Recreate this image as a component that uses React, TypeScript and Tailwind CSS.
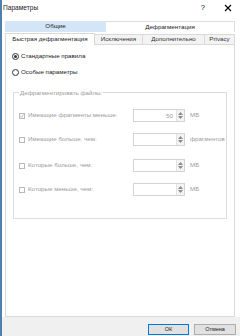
import React from "react";

function Spin() {
  return (
    <div className="w-[8px] h-[11px] flex flex-col items-center justify-center gap-[1px] bg-[#f3f3f3] border-l border-[#e2e2e2]">
      <svg width="5" height="3" viewBox="0 0 5 3"><path d="M0 3 L2.5 0 L5 3 Z" fill="#8a8a8a" /></svg>
      <svg width="5" height="3" viewBox="0 0 5 3"><path d="M0 0 L2.5 3 L5 0 Z" fill="#8a8a8a" /></svg>
    </div>
  );
}

function Row({ label, value, unit, checked, mt }: { label: string; value?: string; unit: string; checked?: boolean; mt: string }) {
  return (
    <div className={`flex items-center h-[11px] pl-[5px] ${mt}`}>
      <div className="w-[6px] h-[6px] border border-[#b9b9b9] bg-white flex items-center justify-center">
        {checked && (
          <svg width="6" height="6" viewBox="0 0 6 6"><path d="M0.6 3 L2.3 4.7 L5.6 0.8" stroke="#8d8d8d" strokeWidth="1" fill="none" /></svg>
        )}
      </div>
      <span className="ml-[3px] w-[105px] text-[#9b9b9b] whitespace-nowrap">{label}</span>
      <div className="flex border border-[#d3d3d3] bg-white">
        <div className="w-[42px] h-[11px] text-right pr-[3px] text-[#9b9b9b] leading-[11px]">{value}</div>
        <Spin />
      </div>
      <span className="ml-[5px] text-[#9b9b9b]">{unit}</span>
    </div>
  );
}

export default function App() {
  return (
    <div className="w-[240px] h-[336px] flex bg-white overflow-hidden text-[6.2px] leading-none text-[#1a1a1a] font-['Liberation_Sans',Arial,sans-serif]">
      <div className="w-[2px] shrink-0 bg-[#4f7fae]" />
      <div className="w-[238px] flex flex-col">
        {/* title */}
        <div className="h-[16px] flex items-center justify-between pl-[1px] pr-[8px]">
          <span className="text-[6.6px]">Параметры</span>
          <div className="flex items-center gap-[19px]">
            <span className="text-[7.5px] text-black">?</span>
            <svg width="8" height="8" viewBox="0 0 8 8" className="shrink-0">
              <path d="M1 1 L7 7 M7 1 L1 7" stroke="#000" strokeWidth="1.1" />
            </svg>
          </div>
        </div>

        {/* tabs */}
        <div className="pl-[3px] pt-[5px]">
          <div className="flex h-[11px]">
            <div className="w-[101px] bg-[#d3e5f6] flex items-center justify-center">Общие</div>
            <div className="w-[129px] border-t border-r border-[#dcdcdc] flex items-center justify-center">Дефрагментация</div>
          </div>
          <div className="flex items-end h-[12px]">
            <div className="w-[90px] h-[12px] bg-white border-t border-l border-r border-[#d9d9d9] flex items-center justify-center relative z-10 -mb-[1px]">Быстрая дефрагментация</div>
            <div className="w-[48px] h-[10px] border-t border-r border-[#d9d9d9] bg-[#f3f3f3] flex items-center justify-center text-[#333]">Исключения</div>
            <div className="w-[62px] h-[10px] border-t border-r border-[#d9d9d9] bg-[#f3f3f3] flex items-center justify-center text-[#333]">Дополнительно</div>
            <div className="w-[30px] h-[10px] border-t border-r border-[#d9d9d9] bg-[#f3f3f3] flex items-center justify-center text-[#333]">Privacy</div>
          </div>
        </div>

        {/* page */}
        <div className="ml-[3px] w-[230px] h-[273px] bg-white border border-[#d9d9d9]">
          <div className="flex items-center h-[10px] mt-[6px] pl-[6px]">
            <div className="w-[7px] h-[7px] rounded-full border border-[#333] flex items-center justify-center">
              <div className="w-[3px] h-[3px] rounded-full bg-[#333]" />
            </div>
            <span className="ml-[2px]">Стандартные правила</span>
          </div>
          <div className="flex items-center h-[10px] mt-[6px] pl-[6px]">
            <div className="w-[7px] h-[7px] rounded-full border border-[#333]" />
            <span className="ml-[2px]">Особые параметры</span>
          </div>

          <div className="relative ml-[7px] mt-[15px] w-[214px] h-[127px] border border-[#dcdcdc]">
            <span className="absolute -top-[3px] left-[5px] bg-white px-[1px] text-[#9b9b9b]">Дефрагментировать файлы:</span>
            <Row mt="mt-[17px]" label="Имеющие фрагменты меньше:" value="50" unit="МБ" checked />
            <Row mt="mt-[13px]" label="Имеющие больше, чем:" unit="фрагментов" />
            <Row mt="mt-[15px]" label="Которые больше, чем:" unit="МБ" />
            <Row mt="mt-[13px]" label="Которые меньше, чем:" unit="МБ" />
          </div>
        </div>

        {/* buttons */}
        <div className="flex-1 bg-[#f0f0f0] flex justify-end items-start pt-[7px] pr-[4px] gap-[5px]">
          <button className="w-[41px] h-[11px] bg-[#e1e1e1] border border-[#0078d7] text-[5.5px] leading-none">ОК</button>
          <button className="w-[42px] h-[11px] bg-[#e1e1e1] border border-[#adadad] text-[5.5px] leading-none">Отмена</button>
        </div>
      </div>
    </div>
  );
}
